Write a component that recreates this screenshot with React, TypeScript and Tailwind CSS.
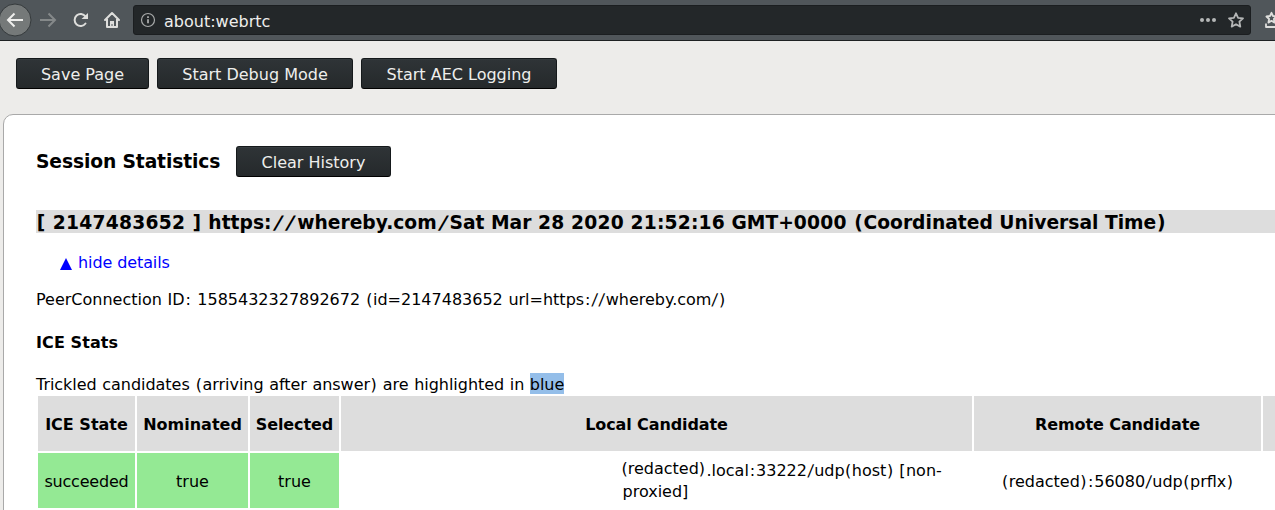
import React from "react";

const buttonClass =
  "flex h-[31px] items-center justify-center rounded-[3px] border border-[#15191b] border-b-black bg-linear-to-b from-[#2f3437] to-[#25292b] pt-px text-[16px] leading-[19px] text-[#eeeeec] shadow-[inset_0_1px_0_#363c3f]";

function Spaced({ text, bold = false }: { text: string; bold?: boolean }) {
  return (
    <>
      {text.split(/([/():[\]]|[0-9]+)/).map((part, i) => {
        if (part === "/")
          return <span key={i} className={bold ? "mx-[3px] inline-block -skew-x-12 scale-x-110" : "mx-[0.9px] inline-block -skew-x-6"}>{part}</span>;
        if (part === ":")
          return <span key={i} className={bold ? "" : "mx-[0.9px]"}>{part}</span>;
        if (/^[()[\]]$/.test(part))
          return <span key={i} className={bold ? "mx-[0.8px]" : "mx-[0.5px]"}>{part}</span>;
        if (bold && /^[0-9]/.test(part))
          return <span key={i} className="tracking-[0.25px]">{part}</span>;
        return <React.Fragment key={i}>{part}</React.Fragment>;
      })}
    </>
  );
}

function Toolbar() {
  return (
    <div className="flex h-[41px] w-full shrink-0 overflow-hidden border-b border-[#1e2123] bg-[#50565a]">
      <svg className="h-10 w-[133px] shrink-0" viewBox="0 0 133 40" fill="none">
        <circle cx="15" cy="20" r="16" fill="#757979" stroke="#353a3c" strokeWidth="1" />
        <path d="M23 20H8M14.500 13.500L8 20l6.500 6.500" stroke="#eeeeec" strokeWidth="2" />
        <path d="M40 20h15M48.500 13.500L55 20l-6.500 6.500" stroke="#85898a" strokeWidth="2" />
        <path d="M85.500 16.500A6 6 0 1 0 85.500 23.500" stroke="#dededc" strokeWidth="2" strokeLinecap="round" />
        <path d="M88 13v6h-6.500z" fill="#dededc" />
        <path d="M105 20l7-7 7 7M107 19v8h10v-8" stroke="#dededc" strokeWidth="2" strokeLinejoin="round" strokeLinecap="round" />
        <path d="M110 27v-6h4v6z" fill="#dededc" />
        <path d="M112 24v2" stroke="#50565a" />
      </svg>
      <div className="mt-[5px] flex h-[30px] w-[1118px] shrink-0 items-center rounded-[3px] border border-[#1b1e20] bg-[#232729]">
        <svg className="ml-[6px] h-4 w-4" viewBox="0 0 16 16" fill="none">
          <circle cx="8" cy="8" r="6.500" stroke="#a9abab" strokeWidth="1.200" />
          <path d="M8 7.200v4M8 4.300v1.700" stroke="#a9abab" strokeWidth="1.800" />
        </svg>
        <span className="ml-[8px] mt-[4px] text-[16px] leading-5 text-[#eeeeec]">about:webrtc</span>
        <svg className="ml-auto mr-[4px] h-5 w-[48px]" viewBox="0 0 48 20" fill="#b5b7b7">
          <circle cx="4" cy="10" r="2" /><circle cx="10" cy="10" r="2" /><circle cx="16" cy="10" r="2" />
          <path d="M38 3.300l2.100 4.500 4.900.6-3.600 3.300.9 4.900-4.300-2.400-4.300 2.400.9-4.900L31 8.400l4.900-.6z" fill="none" stroke="#b5b7b7" strokeWidth="1.800" strokeLinejoin="round" />
        </svg>
      </div>
      <svg className="h-10 w-6 shrink-0" viewBox="0 0 24 40" fill="none" stroke="#dededc" strokeWidth="1.800" strokeLinejoin="round">
        <path d="M20.500 12.800l1.500 3.200 3.600.5-2.700 2.500.7 3.600-3.100-1.800-3.100 1.800.7-3.600-2.700-2.500 3.600-.5z" />
        <path d="M15 23.500V27h11" />
      </svg>
    </div>
  );
}

function StatsTable() {
  return (
    <div className="ml-[2px] grid shrink-0 grid-cols-[97px_111px_89px_631px_287px_100px] grid-rows-[55px_55px] gap-[2px] whitespace-nowrap text-[16px] *:flex *:items-center *:justify-center">
      <div className="bg-[#ddd] pt-[3px] font-bold">ICE State</div>
      <div className="bg-[#ddd] pt-[3px] font-bold">Nominated</div>
      <div className="bg-[#ddd] pt-[3px] font-bold tracking-[-0.1px]">Selected</div>
      <div className="bg-[#ddd] pt-[3px] font-bold tracking-[-0.1px]">Local Candidate</div>
      <div className="bg-[#ddd] pt-[3px] font-bold tracking-[-0.1px]">Remote Candidate</div>
      <div className="bg-[#ddd]" />
      <div className="bg-[#94e994] pt-[3px] tracking-[-0.2px]">succeeded</div>
      <div className="bg-[#94e994] pt-[3px]">true</div>
      <div className="bg-[#94e994] pt-[3px]">true</div>
      <div>
        <div className="ml-[252px] w-[322px] leading-[21px]">
          <div className="flex">
            <span className="-mt-[2px] w-[85px]">(redacted)</span>
            <span><Spaced text=".local:33222/udp(host) [non-" /></span>
          </div>
          <div className="ml-px">proxied]</div>
        </div>
      </div>
      <div className="pt-[3px]"><span><Spaced text="(redacted):56080/udp(prflx)" /></span></div>
      <div />
    </div>
  );
}

export default function App() {
  return (
    <div className="flex h-[510px] w-[1275px] flex-col overflow-hidden bg-[#edecea] font-['DejaVu_Sans',sans-serif] text-black">
      <Toolbar />
      <div className="mb-[25px] ml-4 mt-[17px] flex shrink-0 gap-2">
        <button className={buttonClass + " w-[133px]"}>Save Page</button>
        <button className={buttonClass + " w-[196px]"}>Start Debug Mode</button>
        <button className={buttonClass + " w-[196px]"}>Start AEC Logging</button>
      </div>
      <main className="ml-[3px] flex h-[440px] w-[1400px] shrink-0 flex-col rounded-tl-[10px] border border-[#a9a9a9] bg-white pl-8 pt-[31px]">
        <div className="flex h-[31px] shrink-0 items-center gap-4">
          <h3 className="w-[184px] whitespace-nowrap pt-px text-[18.7px] font-bold tracking-[-0.12px]">Session Statistics</h3>
          <button className={buttonClass + " w-[155px]"}>Clear History</button>
        </div>
        <h3 className="mt-[33px] h-[23px] shrink-0 whitespace-nowrap bg-[#ddd] pt-px text-[18.7px] font-bold leading-[23px]"><Spaced bold text="[ 2147483652 ] https://whereby.com/Sat Mar 28 2020 21:52:16 GMT+0000 (Coordinated Universal Time)" /></h3>
        <div className="ml-6 mt-[19px] flex h-[21px] shrink-0 items-center text-[16px] tracking-[-0.1px] text-[#0000ff]">
          <svg className="mr-[6px] mt-[3px] h-3 w-3" viewBox="0 0 12 12"><path d="M6 0l6 12H0z" fill="currentColor" /></svg>
          <span>hide details</span>
        </div>
        <p className="mt-4 h-[21px] shrink-0 text-[16px] leading-[21px] [word-spacing:0.5px]"><Spaced text="PeerConnection ID: 1585432327892672 (id=2147483652 url=https://whereby.com/)" /></p>
        <h4 className="mt-[22px] h-[21px] shrink-0 text-[16px] font-bold leading-[21px] tracking-[0.1px]">ICE Stats</h4>
        <p className="mb-px mt-[21px] h-[21px] shrink-0 text-[16px] leading-[21px] tracking-[-0.03px] [word-spacing:0.5px]"><Spaced text="Trickled candidates (arriving after answer) are highlighted in " /><span className="relative -top-px inline-block h-[21px] bg-[#94bee9]"><span className="relative top-px">blue</span></span></p>
        <StatsTable />
      </main>
    </div>
  );
}
